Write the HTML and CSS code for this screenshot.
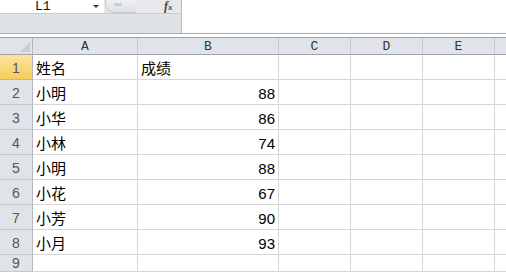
FILE: index.html
```html
<!DOCTYPE html>
<html>
<head>
<meta charset="utf-8">
<link rel="stylesheet" href="styles.css">
</head>
<body>
<div class="app">
  <div class="toolbar">
    <div class="tool-left">
      <div class="name-row">
        <div class="namebox"><span class="ref">L1</span><span class="arrow"></span></div>
        <div class="fx-area"><span class="pill"></span><span class="fx">f<span class="fx-x">x</span></span></div>
      </div>
      <div class="band"></div>
    </div>
    <div class="formula"></div>
  </div>
  <div class="gap"></div>
  <div class="sheet">
    <div class="hd corner"><span class="tri"></span></div>
    <div class="hd col">A</div>
    <div class="hd col">B</div>
    <div class="hd col">C</div>
    <div class="hd col">D</div>
    <div class="hd col">E</div>
    <div class="hd col last"></div>

    <div class="rh sel">1</div><div class="c txt">姓名</div><div class="c txt">成绩</div><div class="c"></div><div class="c"></div><div class="c"></div><div class="c last"></div>
    <div class="rh">2</div><div class="c txt">小明</div><div class="c num">88</div><div class="c"></div><div class="c"></div><div class="c"></div><div class="c last"></div>
    <div class="rh">3</div><div class="c txt">小华</div><div class="c num">86</div><div class="c"></div><div class="c"></div><div class="c"></div><div class="c last"></div>
    <div class="rh">4</div><div class="c txt">小林</div><div class="c num">74</div><div class="c"></div><div class="c"></div><div class="c"></div><div class="c last"></div>
    <div class="rh">5</div><div class="c txt">小明</div><div class="c num">88</div><div class="c"></div><div class="c"></div><div class="c"></div><div class="c last"></div>
    <div class="rh">6</div><div class="c txt">小花</div><div class="c num">67</div><div class="c"></div><div class="c"></div><div class="c"></div><div class="c last"></div>
    <div class="rh">7</div><div class="c txt">小芳</div><div class="c num">90</div><div class="c"></div><div class="c"></div><div class="c"></div><div class="c last"></div>
    <div class="rh">8</div><div class="c txt">小月</div><div class="c num">93</div><div class="c"></div><div class="c"></div><div class="c"></div><div class="c last"></div>
    <div class="rh short">9</div><div class="c"></div><div class="c"></div><div class="c"></div><div class="c"></div><div class="c"></div><div class="c last"></div>
  </div>
</div>
</body>
</html>
```
FILE: styles.css
```css
html, body {
  margin: 0;
  padding: 0;
  background: #ffffff;
}
.app {
  width: 506px;
  height: 274px;
  overflow: hidden;
  font-family: "Liberation Sans", Arial, sans-serif;
}
.toolbar {
  display: flex;
  height: 33px;
  border-bottom: 1px solid #a9acb1;
}
.tool-left {
  width: 181px;
  display: flex;
  flex-direction: column;
  border-right: 1px solid #b6b9be;
}
.name-row {
  display: flex;
  height: 13px;
  border-bottom: 1px solid #c9ccd1;
}
.namebox {
  width: 104px;
  background: #ffffff;
  position: relative;
}
.ref {
  position: absolute;
  left: 35px;
  top: 1px;
  font-family: "Liberation Mono", monospace;
  font-size: 13px;
  line-height: 12px;
  color: #111;
}
.arrow {
  position: absolute;
  left: 93px;
  top: 5px;
  width: 0;
  height: 0;
  border-left: 3px solid transparent;
  border-right: 3px solid transparent;
  border-top: 3px solid #333;
}
.fx-area {
  flex: 1;
  background: #e6e8eb;
  position: relative;
}
.pill {
  position: absolute;
  left: 1px;
  top: -6px;
  width: 30px;
  height: 17px;
  border-radius: 9px 0 0 9px;
  background: linear-gradient(#f4f5f6, #dfe1e4);
  border: 1px solid #c4c7cc;
  border-right: none;
}
.pill::after {
  content: "";
  position: absolute;
  left: 8px;
  top: 8px;
  width: 8px;
  height: 3px;
  border-radius: 2px;
  background: #c9ccd0;
}
.fx {
  position: absolute;
  left: 60px;
  top: 0;
  height: 12px;
  display: flex;
  align-items: flex-end;
  font-family: "Liberation Serif", serif;
  font-style: italic;
  font-weight: bold;
  font-size: 12px;
  line-height: 12px;
  color: #444;
}
.fx-x {
  font-size: 9px;
  line-height: 9px;
}
.band {
  flex: 1;
  background: #dfe2e6;
}
.formula {
  flex: 1;
  background: #ffffff;
}
.gap {
  height: 3px;
  background: #ffffff;
}
.sheet {
  display: grid;
  grid-template-columns: 33px 105px 141px 72px 72px 72px 11px;
  grid-template-rows: 17px repeat(8, 25px) 17px;
  border-top: 1px solid #9fa3a9;
}
.hd {
  background: #e0e3e8;
  border-right: 1px solid #c5c8cd;
  border-bottom: 1px solid #9fa3a9;
  font-family: "Liberation Mono", monospace;
  font-size: 13px;
  color: #333;
  display: flex;
  align-items: center;
  justify-content: center;
}
.corner {
  position: relative;
  border-right-color: #b4b8be;
}
.tri {
  position: absolute;
  right: 2px;
  bottom: 2px;
  width: 0;
  height: 0;
  border-left: 10px solid transparent;
  border-bottom: 10px solid #c8cbd0;
}
.hd.last, .c.last {
  border-right: none;
}
.rh {
  background: #e0e3e8;
  border-right: 1px solid #b4b8be;
  border-bottom: 1px solid #c5c8cd;
  font-size: 14px;
  color: #555;
  display: flex;
  align-items: flex-end;
  justify-content: center;
  padding-bottom: 3px;
  box-sizing: border-box;
}
.rh.short {
  padding-bottom: 0;
  align-items: center;
}
.rh.sel {
  background: linear-gradient(#fbe49f, #f6cd5c);
  border-bottom-color: #e1b54a;
}
.c {
  border-right: 1px solid #d6d6d6;
  border-bottom: 1px solid #d6d6d6;
  display: flex;
  align-items: center;
  padding: 0 3px;
  box-sizing: border-box;
  color: #000;
}
.txt {
  font-family: "Noto Sans CJK SC", sans-serif;
  font-size: 15px;
  padding-top: 1px;
}
.num {
  justify-content: flex-end;
  font-size: 15px;
  padding-top: 2px;
}
```
